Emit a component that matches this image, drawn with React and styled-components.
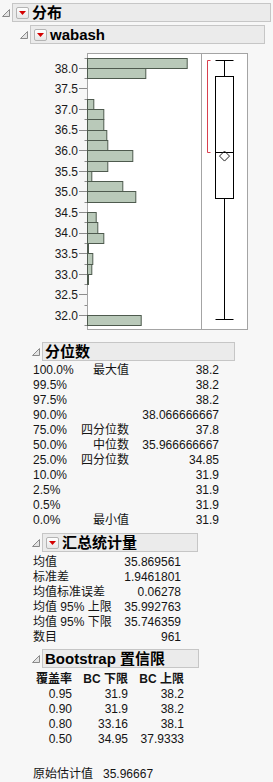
import React from 'react';
import styled, { createGlobalStyle } from 'styled-components';

const GlobalStyle = createGlobalStyle`
  html, body {
    margin: 0;
    padding: 0;
    background: #f7f7f7;
  }
  body {
    font-family: "Liberation Sans", "Noto Sans CJK SC", sans-serif;
    font-size: 12px;
    color: #141414;
  }
`;

// Estrutura geral
const Page = styled.div`
  padding: 3px 0 0 2px;
  width: 273px;
  box-sizing: border-box;
`;

const Node = styled.div`
  margin-top: ${(p) => p.$top || 0}px;
`;

const HeadRow = styled.div`
  display: flex;
  align-items: center;
`;

const Disclosure = styled.svg`
  width: 8px;
  height: 8px;
  margin-right: 2px;
  flex: none;
`;

const HeadBox = styled.div`
  box-sizing: border-box;
  width: ${(p) => p.$width}px;
  height: 19px;
  border: 1px solid #c6c6c6;
  background: #ebebeb;
  display: flex;
  align-items: center;
  padding-left: 2px;
`;

const MenuButton = styled.div`
  box-sizing: border-box;
  width: 13px;
  height: 12px;
  margin: 0 3px 0 1px;
  border: 1px solid #b4b4b4;
  border-radius: 2px;
  background: linear-gradient(#ffffff, #e6e6e6);
  display: flex;
  align-items: center;
  justify-content: center;
  flex: none;
`;

const Title = styled.span`
  font-weight: bold;
  font-size: 15px;
  line-height: 17px;
  color: #000;
  white-space: nowrap;
`;

const Body = styled.div`
  padding-left: ${(p) => p.$indent || 0}px;
`;

// Grafico
const ChartRow = styled.div`
  display: flex;
  margin-top: 9px;
  height: 277px;
`;

const AxisSvg = styled.svg`
  width: 55px;
  height: 277px;
  overflow: visible;
  flex: none;
`;

const Frame = styled.div`
  box-sizing: border-box;
  width: ${(p) => p.$width}px;
  height: 277px;
  border: 1px solid #a4a4a4;
  border-left: ${(p) => (p.$noLeft ? 'none' : '1px solid #a4a4a4')};
  background: #fff;
  flex: none;
`;

const FrameSvg = styled.svg`
  display: block;
  width: 100%;
  height: 100%;
  overflow: visible;
`;

// Tabelas
const Table = styled.div`
  display: grid;
  grid-template-columns: ${(p) => p.$cols};
  margin-top: ${(p) => p.$top || 0}px;
  margin-left: 1px;
  width: ${(p) => p.$width || 'auto'};
  line-height: 15px;
  white-space: nowrap;
`;

const Cell = styled.div`
  text-align: ${(p) => (p.$right ? 'right' : 'left')};
  font-weight: ${(p) => (p.$bold ? 'bold' : 'normal')};
  height: ${(p) => p.$h || 15}px;
`;

const EstimateRow = styled.div`
  display: flex;
  gap: 10px;
  margin: 20px 0 0 1px;
  line-height: 15px;
`;

const tri = (
  <Disclosure viewBox="0 0 8 8">
    <path d="M0.5 7.5 L7.5 7.5 L7.5 0.5 Z" fill="#e4e4e4" stroke="#8a8a8a" strokeWidth="1" />
  </Disclosure>
);

const Outline = ({ title, menu, width, top, indent, children }) => (
  <Node $top={top}>
    <HeadRow>
      {tri}
      <HeadBox $width={width}>
        {menu && (
          <MenuButton>
            <svg width="7" height="4" viewBox="0 0 7 4">
              <path d="M0 0 L7 0 L3.5 4 Z" fill="#d40000" />
            </svg>
          </MenuButton>
        )}
        <Title>{title}</Title>
      </HeadBox>
    </HeadRow>
    <Body $indent={indent}>{children}</Body>
  </Node>
);

// dados do histograma (limite inferior do bin, borda direita em px da pagina)
const bins = [
  [38.0, 187.7], [37.75, 146.3], [37.0, 94.3], [36.75, 104.3], [36.5, 104.3],
  [36.25, 107.3], [36.0, 108.3], [35.75, 133.3], [35.5, 108.3], [35.25, 92.3],
  [35.0, 123.3], [34.75, 136.3], [34.25, 96.7], [34.0, 98.3], [33.75, 104.3],
  [33.5, 88.3], [33.25, 93.3], [33.0, 92.3], [32.75, 88.3], [31.75, 141.7],
];

const PX = 41.2;
const yAxis = (v) => 15.3 + (38 - v) * PX;
const yIn = (v) => yAxis(v) - 1;
const half = (n) => Math.round(n - 0.5) + 0.5;

const Axis = () => {
  const labels = [];
  const ticks = [];
  for (let i = 0; i <= 12; i++) {
    const v = 38 - i * 0.5;
    labels.push(
      <text key={'l' + i} x="46" y={yAxis(v) + 4.3} textAnchor="end" fontSize="12"
        fontFamily="Liberation Sans, sans-serif" fill="#1a1a1a">
        {v.toFixed(1)}
      </text>
    );
  }
  for (let v = 38.25; v >= 31.74; v -= 0.25) {
    const major = Math.abs(v * 2 - Math.round(v * 2)) < 0.01;
    const y = half(yAxis(v));
    ticks.push(<line key={'t' + v} x1={major ? 47 : 52.5} x2="55" y1={y} y2={y} stroke="#8c8c8c" />);
  }
  return (
    <AxisSvg viewBox="0 0 55 277">
      {ticks}
      {labels}
    </AxisSvg>
  );
};

const Histogram = () => (
  <Frame $width={115}>
    <FrameSvg viewBox="0 0 113 275">
      {bins.map(([lo, right]) => {
        const top = half(yIn(lo + 0.25));
        const bottom = half(yIn(lo));
        return (
          <rect key={lo} x="-0.5" y={top} width={Math.max(right - 88, 1)} height={bottom - top}
            fill="#b9c9b9" stroke="#4e5a4e" strokeWidth="1" />
        );
      })}
    </FrameSvg>
  </Frame>
);

const BoxPlot = () => {
  const yMax = half(yIn(38.2));
  const yQ3 = half(yIn(37.8));
  const yMed = half(yIn(35.966666667));
  const yQ1 = half(yIn(34.85));
  const yMin = half(yIn(31.9));
  const yMean = yIn(35.869561);
  return (
    <Frame $width={46} $noLeft>
      <FrameSvg viewBox="0 0 45 275">
        <path d={`M8.5 ${yMax} H5.5 V${yMed} H8.5`} fill="none" stroke="#d9404f" />
        <line x1="22.5" x2="22.5" y1={yMax} y2={yQ3} stroke="#000" />
        <line x1="22.5" x2="22.5" y1={yQ1} y2={yMin} stroke="#000" />
        <line x1="13.5" x2="31.5" y1={yMax} y2={yMax} stroke="#000" />
        <line x1="13.5" x2="31.5" y1={yMin} y2={yMin} stroke="#000" />
        <rect x="13.5" y={yQ3} width="18" height={yQ1 - yQ3} fill="#fff" stroke="#000" />
        <line x1="13.5" x2="31.5" y1={yMed} y2={yMed} stroke="#000" />
        <path d={`M22.5 ${yMean - 5} L27.5 ${yMean} L22.5 ${yMean + 5} L17.5 ${yMean} Z`}
          fill="none" stroke="#222" />
      </FrameSvg>
    </Frame>
  );
};

const quantiles = [
  ['100.0%', '最大值', '38.2'],
  ['99.5%', '', '38.2'],
  ['97.5%', '', '38.2'],
  ['90.0%', '', '38.066666667'],
  ['75.0%', '四分位数', '37.8'],
  ['50.0%', '中位数', '35.966666667'],
  ['25.0%', '四分位数', '34.85'],
  ['10.0%', '', '31.9'],
  ['2.5%', '', '31.9'],
  ['0.5%', '', '31.9'],
  ['0.0%', '最小值', '31.9'],
];

const summary = [
  ['均值', '35.869561'],
  ['标准差', '1.9461801'],
  ['均值标准误差', '0.06278'],
  ['均值 95% 上限', '35.992763'],
  ['均值 95% 下限', '35.746359'],
  ['数目', '961'],
];

const boot = [
  ['0.95', '31.9', '38.2'],
  ['0.90', '31.9', '38.2'],
  ['0.80', '33.16', '38.1'],
  ['0.50', '34.95', '37.9333'],
];

const App = () => (
  <Page>
    <GlobalStyle />
    <Outline title="分布" menu width={259} indent={18}>
      <Outline title="wabash" menu width={235} top={3} indent={12}>
        <ChartRow>
          <Axis />
          <Histogram />
          <BoxPlot />
        </ChartRow>

        <Outline title="分位数" width={193} top={12} indent={0}>
          <Table $cols="48px 48px 90px" $top={2}>
            {quantiles.map(([p, l, v]) => (
              <React.Fragment key={p}>
                <Cell>{p}</Cell>
                <Cell $right>{l}</Cell>
                <Cell $right>{v}</Cell>
              </React.Fragment>
            ))}
          </Table>
        </Outline>

        <Outline title="汇总统计量" menu width={156} top={5} indent={0}>
          <Table $cols="1fr auto" $width="148px" $top={3}>
            {summary.map(([l, v]) => (
              <React.Fragment key={l}>
                <Cell>{l}</Cell>
                <Cell $right>{v}</Cell>
              </React.Fragment>
            ))}
          </Table>
        </Outline>

        <Outline title="Bootstrap 置信限" width={157} top={4} indent={0}>
          <Table $cols="39px 56px 56px" $top={4}>
            <Cell $right $bold>覆盖率</Cell>
            <Cell $right $bold>BC 下限</Cell>
            <Cell $right $bold>BC 上限</Cell>
            {boot.map(([c, lo, hi]) => (
              <React.Fragment key={c}>
                <Cell $right>{c}</Cell>
                <Cell $right>{lo}</Cell>
                <Cell $right>{hi}</Cell>
              </React.Fragment>
            ))}
          </Table>
          <EstimateRow>
            <span>原始估计值</span>
            <span>35.96667</span>
          </EstimateRow>
        </Outline>
      </Outline>
    </Outline>
  </Page>
);

export default App;
